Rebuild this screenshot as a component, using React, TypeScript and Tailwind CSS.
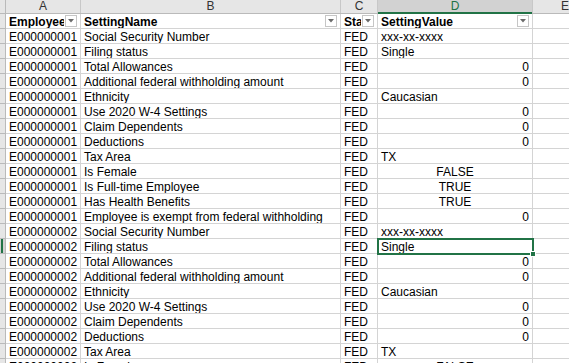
const rows: [string, string, string, string, "l" | "r" | "c"][] = [
  ["E000000001", "Social Security Number", "FED", "xxx-xx-xxxx", "l"],
  ["E000000001", "Filing status", "FED", "Single", "l"],
  ["E000000001", "Total Allowances", "FED", "0", "r"],
  ["E000000001", "Additional federal withholding amount", "FED", "0", "r"],
  ["E000000001", "Ethnicity", "FED", "Caucasian", "l"],
  ["E000000001", "Use 2020 W-4 Settings", "FED", "0", "r"],
  ["E000000001", "Claim Dependents", "FED", "0", "r"],
  ["E000000001", "Deductions", "FED", "0", "r"],
  ["E000000001", "Tax Area", "FED", "TX", "l"],
  ["E000000001", "Is Female", "FED", "FALSE", "c"],
  ["E000000001", "Is Full-time Employee", "FED", "TRUE", "c"],
  ["E000000001", "Has Health Benefits", "FED", "TRUE", "c"],
  ["E000000001", "Employee is exempt from federal withholding", "FED", "0", "r"],
  ["E000000002", "Social Security Number", "FED", "xxx-xx-xxxx", "l"],
  ["E000000002", "Filing status", "FED", "Single", "l"],
  ["E000000002", "Total Allowances", "FED", "0", "r"],
  ["E000000002", "Additional federal withholding amount", "FED", "0", "r"],
  ["E000000002", "Ethnicity", "FED", "Caucasian", "l"],
  ["E000000002", "Use 2020 W-4 Settings", "FED", "0", "r"],
  ["E000000002", "Claim Dependents", "FED", "0", "r"],
  ["E000000002", "Deductions", "FED", "0", "r"],
  ["E000000002", "Tax Area", "FED", "TX", "l"],
  ["E000000002", "Is Female", "FED", "FALSE", "c"],
];

const SELECTED = 14;

function FilterButton() {
  return (
    <div className="absolute right-[3px] top-[1px] flex h-[12px] w-[12px] items-center justify-center border border-[#c6c6c6] bg-white">
      <svg width="6" height="4" viewBox="0 0 6 4">
        <path d="M0 0h6L3 3.5z" fill="#6b6b6b" />
      </svg>
    </div>
  );
}

function Cell({
  w,
  children,
  align = "l",
  bold = false,
  filter = false,
  selected = false,
}: {
  w: string;
  children?: React.ReactNode;
  align?: "l" | "r" | "c";
  bold?: boolean;
  filter?: boolean;
  selected?: boolean;
}) {
  const al = align === "r" ? "text-right" : align === "c" ? "text-center" : "text-left";
  return (
    <div className={`relative h-[15px] shrink-0 border-b border-r border-[#d4d4d4] ${w} ${selected ? "z-10" : ""}`}>
      <div
        className={`h-full overflow-hidden whitespace-nowrap pl-[3px] pt-[2px] leading-[13px] ${filter ? "mr-[16px]" : "pr-[3px]"} ${al} ${bold ? "font-bold" : ""}`}
      >
        {children}
      </div>
      {filter && <FilterButton />}
      {selected && (
        <div className="absolute -left-[1px] -top-[1px] h-[17px] w-[157px] border-2 border-[#217346]">
          <div className="absolute -bottom-[4px] -right-[4px] h-[6px] w-[6px] border border-white bg-[#217346]" />
        </div>
      )}
    </div>
  );
}

export default function App() {
  return (
    <div
      className="h-[363px] w-[569px] overflow-hidden bg-white text-[12px] text-black"
      style={{ fontFamily: '"Liberation Sans", Arial, sans-serif' }}
    >
      {/* column letters */}
      <div className="flex h-[14px] border-b border-[#bababa] bg-[#e6e6e6] text-[12px] leading-[13px] text-[#333]">
        <div className="w-[6px] shrink-0 border-r border-[#bababa]" />
        <div className="w-[75px] shrink-0 border-r border-[#c8c8c8] text-center">A</div>
        <div className="w-[260px] shrink-0 border-r border-[#c8c8c8] text-center">B</div>
        <div className="w-[37px] shrink-0 border-r border-[#c8c8c8] text-center">C</div>
        <div className="relative w-[155px] shrink-0 border-r border-[#c8c8c8] bg-[#d2d2d2] text-center text-[#217346]">
          D
          <div className="absolute inset-x-0 -bottom-[1px] h-[2px] bg-[#217346]" />
        </div>
        <div className="w-[64px] shrink-0 text-center">E</div>
      </div>

      {/* header row */}
      <div className="flex">
        <div className="h-[15px] w-[6px] shrink-0 border-b border-r border-[#bababa] bg-[#e6e6e6]" />
        <Cell w="w-[75px]" bold filter>EmployeeId</Cell>
        <Cell w="w-[260px]" bold filter>SettingName</Cell>
        <Cell w="w-[37px]" bold filter>Status</Cell>
        <Cell w="w-[155px]" bold filter>SettingValue</Cell>
        <Cell w="w-[64px]" />
      </div>

      {rows.map((r, i) => (
        <div key={i} className="flex">
          <div
            className={`relative h-[15px] w-[6px] shrink-0 border-b border-r border-[#bababa] ${i === SELECTED ? "bg-[#d2d2d2]" : "bg-[#e6e6e6]"}`}
          >
            {i === SELECTED && <div className="absolute inset-y-0 left-[1px] w-[2px] bg-[#217346]" />}
          </div>
          <Cell w="w-[75px]">{r[0]}</Cell>
          <Cell w="w-[260px]">{r[1]}</Cell>
          <Cell w="w-[37px]">{r[2]}</Cell>
          <Cell w="w-[155px]" align={r[4]} selected={i === SELECTED}>
            {r[3]}
          </Cell>
          <Cell w="w-[64px]" />
        </div>
      ))}
    </div>
  );
}
